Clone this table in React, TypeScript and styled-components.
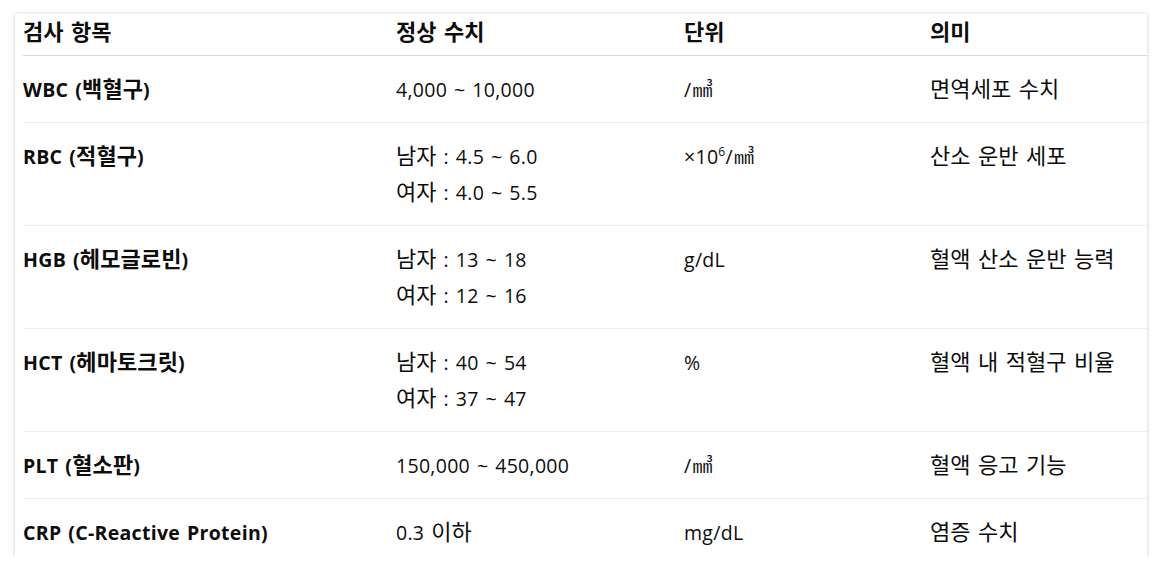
import React from "react";
import styled, { createGlobalStyle } from "styled-components";

const Global = createGlobalStyle`
  html, body { margin: 0; padding: 0; background: #ffffff; }
  body { font-family: "Open Sans", "Noto Sans CJK KR", sans-serif; color: #0d0d0d; }
`;

const Page = styled.div`
  padding: 14px 15px 0 15px;
`;

const Card = styled.div`
  background: #fff;
  box-shadow: 0 0 4px rgba(0, 0, 0, 0.18), 0 2px 3px rgba(0, 0, 0, 0.06);
  padding-left: 8px;
  height: 542px;
  overflow: hidden;
`;

const Row = styled.div<{ $head?: boolean }>`
  display: grid;
  grid-template-columns: 373px 288px 246px 1fr;
  border-bottom: 1px solid ${(p) => (p.$head ? "#d9d9d9" : "#ececec")};
  padding: ${(p) => (p.$head ? "1px 0 4px" : "16px 0 14px")};
  font-size: 19.5px;
  letter-spacing: 0.3px;
  word-spacing: 1.5px;
  line-height: 36px;
  &:last-child { border-bottom: none; }
`;

const Cell = styled.div<{ $bold?: boolean }>`
  font-weight: ${(p) => (p.$bold ? 700 : 400)};
  white-space: nowrap;
  height: fit-content;
`;

const Line = styled.div`
  display: block;
  height: 36px;
`;

const Ko = styled.span`
  font-size: 22px;
  letter-spacing: 0.1px;
  line-height: 1;
`;

const Sup = styled.sup`
  font-size: 12px;
  line-height: 0;
  vertical-align: 8px;
`;

const Unit = styled.span`
  font-size: 20px;
  letter-spacing: 0;
  line-height: 1;
  margin-left: 1px;
`;

function K({ text }: { text: string }) {
  const parts = text.split(/([\uAC00-\uD7A3]+(?:\s+[\uAC00-\uD7A3]+)*)/);
  return (
    <>
      {parts.map((p, i) =>
        /[\uAC00-\uD7A3]/.test(p) ? <Ko key={i}>{p}</Ko> : <React.Fragment key={i}>{p}</React.Fragment>
      )}
    </>
  );
}

const MM3 = () => <Unit>㎣</Unit>;

type R = { name: string; range: string[]; unit: React.ReactNode; mean: string };

const rows: R[] = [
  { name: "WBC (백혈구)", range: ["4,000 ~ 10,000"], unit: <>/<MM3 /></>, mean: "면역세포 수치" },
  {
    name: "RBC (적혈구)",
    range: ["남자 : 4.5 ~ 6.0", "여자 : 4.0 ~ 5.5"],
    unit: <>×10<Sup>6</Sup>/<MM3 /></>,
    mean: "산소 운반 세포",
  },
  {
    name: "HGB (헤모글로빈)",
    range: ["남자 : 13 ~ 18", "여자 : 12 ~ 16"],
    unit: "g/dL",
    mean: "혈액 산소 운반 능력",
  },
  {
    name: "HCT (헤마토크릿)",
    range: ["남자 : 40 ~ 54", "여자 : 37 ~ 47"],
    unit: "%",
    mean: "혈액 내 적혈구 비율",
  },
  { name: "PLT (혈소판)", range: ["150,000 ~ 450,000"], unit: <>/<MM3 /></>, mean: "혈액 응고 기능" },
  { name: "CRP (C-Reactive Protein)", range: ["0.3 이하"], unit: "mg/dL", mean: "염증 수치" },
];

const headers = ["검사 항목", "정상 수치", "단위", "의미"];

export default function App() {
  return (
    <>
      <Global />
      <Page>
        <Card>
          <Row $head>
            {headers.map((h) => (
              <Cell $bold key={h}><K text={h} /></Cell>
            ))}
          </Row>
          {rows.map((r) => (
            <Row key={r.name}>
              <Cell $bold><K text={r.name} /></Cell>
              <Cell>
                {r.range.map((l) => (
                  <Line key={l}><K text={l} /></Line>
                ))}
              </Cell>
              <Cell>{r.unit}</Cell>
              <Cell><K text={r.mean} /></Cell>
            </Row>
          ))}
        </Card>
      </Page>
    </>
  );
}
